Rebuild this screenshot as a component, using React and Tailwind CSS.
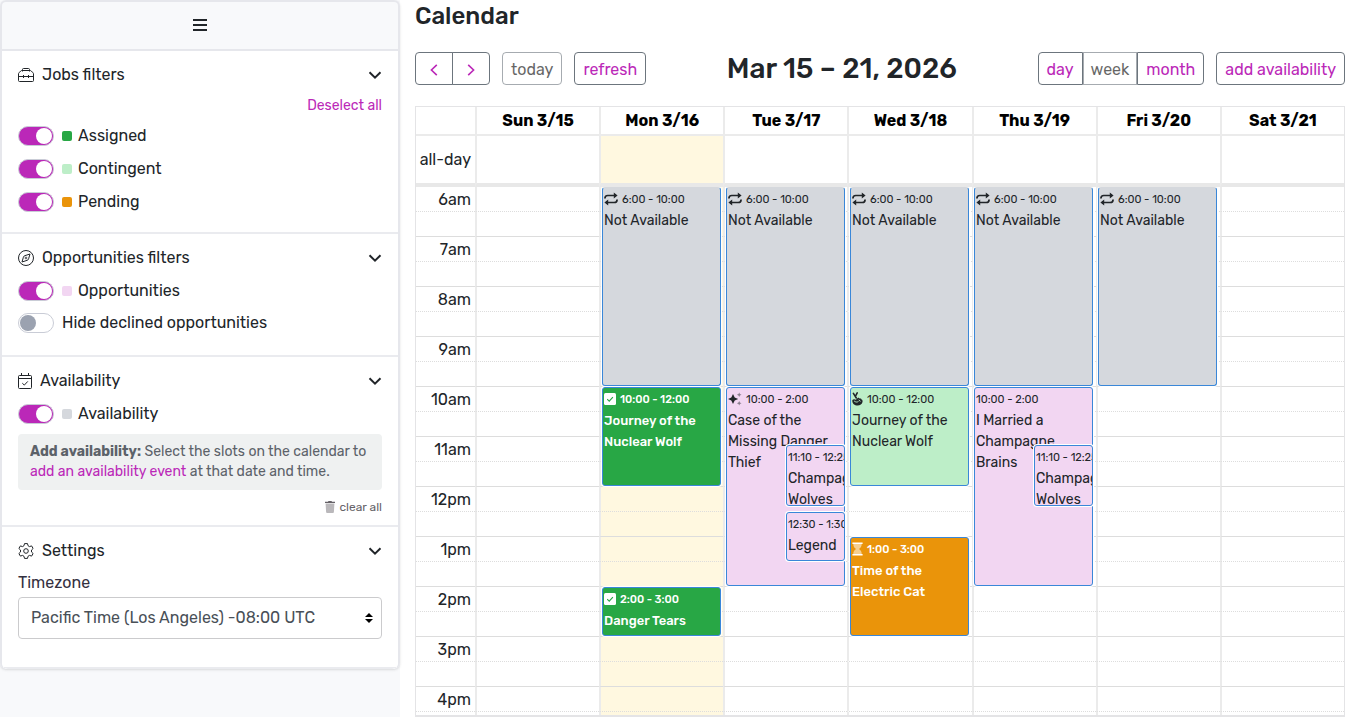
import { useState } from 'react';
import clsx from 'clsx';

const HOURS = ['6am', '7am', '8am', '9am', '10am', '11am', '12pm', '1pm', '2pm', '3pm', '4pm'];
const FIRST_HOUR = 6;
const HOUR_HEIGHT = 50;

const DAYS = [
  { label: 'Sun 3/15', events: [] },
  {
    label: 'Mon 3/16',
    today: true,
    events: [
      { kind: 'unavailable', start: 6, end: 10, time: '6:00 - 10:00', title: 'Not Available' },
      { kind: 'assigned', start: 10, end: 12, time: '10:00 - 12:00', title: 'Journey of the Nuclear Wolf' },
      { kind: 'assigned', start: 14, end: 15, time: '2:00 - 3:00', title: 'Danger Tears' },
    ],
  },
  {
    label: 'Tue 3/17',
    events: [
      { kind: 'unavailable', start: 6, end: 10, time: '6:00 - 10:00', title: 'Not Available' },
      { kind: 'opportunity', start: 10, end: 14, time: '10:00 - 2:00', title: 'Case of the Missing Danger Thief', isNew: true },
      { kind: 'opportunity', start: 11.16, end: 12.4, time: '11:10 - 12:25', title: 'Champagne Wolves', inset: true },
      { kind: 'opportunity', start: 12.5, end: 13.5, time: '12:30 - 1:30', title: 'Legend of the', inset: true },
    ],
  },
  {
    label: 'Wed 3/18',
    events: [
      { kind: 'unavailable', start: 6, end: 10, time: '6:00 - 10:00', title: 'Not Available' },
      { kind: 'contingent', start: 10, end: 12, time: '10:00 - 12:00', title: 'Journey of the Nuclear Wolf' },
      { kind: 'pending', start: 13, end: 15, time: '1:00 - 3:00', title: 'Time of the Electric Cat' },
    ],
  },
  {
    label: 'Thu 3/19',
    events: [
      { kind: 'unavailable', start: 6, end: 10, time: '6:00 - 10:00', title: 'Not Available' },
      { kind: 'opportunity', start: 10, end: 14, time: '10:00 - 2:00', title: 'I Married a Champagne Brains' },
      { kind: 'opportunity', start: 11.16, end: 12.4, time: '11:10 - 12:25', title: 'Champagne Wolves', inset: true },
    ],
  },
  {
    label: 'Fri 3/20',
    events: [{ kind: 'unavailable', start: 6, end: 10, time: '6:00 - 10:00', title: 'Not Available' }],
  },
  { label: 'Sat 3/21', events: [] },
];

const EVENT_STYLES = {
  unavailable: 'bg-[#d5d8dd] text-[#212529] text-sm',
  assigned: 'bg-[#28a745] text-white text-[13px] font-medium',
  contingent: 'bg-[#bdeec8] text-[#212529] text-sm',
  pending: 'bg-[#ea940a] text-white text-[13px] font-medium',
  opportunity: 'bg-[#f2d6f2] text-[#212529] text-sm',
};

const RepeatIcon = () => (
  <svg viewBox="0 0 14 14" className="h-3.5 w-3.5" fill="none" stroke="currentColor" strokeWidth="1.7" aria-hidden="true">
    <path d="M.9 6.600C.9 4.400 1.900 3.500 3.800 3.500H10.500" />
    <path d="M13.100 7.400c0 2.200-1 3.100-2.900 3.100H3.500" />
    <path d="M9.800.4 13.600 3.500 9.800 6.600zM4.200 7.400.4 10.500l3.800 3.100z" fill="currentColor" stroke="none" />
  </svg>
);

const CheckSquareIcon = () => (
  <svg viewBox="0 0 12 12" className="h-3 w-3" aria-hidden="true">
    <rect width="12" height="12" rx="1.5" fill="currentColor" />
    <path d="m3.2 6.2 2 1.9 3.7-4" fill="none" stroke="#28a745" strokeWidth="1.1" />
  </svg>
);

const SparklesIcon = () => (
  <svg viewBox="0 0 14 14" className="h-3.5 w-3.5" fill="currentColor" aria-hidden="true">
    <path d="M5 2 6.700 5.500 10.200 7 6.700 8.500 5 12 3.300 8.500-.2 7l3.500-1.500z" />
    <path d="M11.200.4l.7 1.600 1.600.7-1.600.7-.7 1.600-.7-1.600-1.600-.7 1.600-.7zM11.200 9l.7 1.600 1.600.7-1.600.7-.7 1.600-.7-1.600-1.600-.7 1.600-.7z" opacity=".5" />
  </svg>
);

const FingersCrossedIcon = () => (
  <svg viewBox="0 0 11 14" className="h-3.5 w-[11px]" aria-hidden="true">
    <path d="M1.400 1.400 4.300 6M5.200.900 3.600 4" fill="none" stroke="currentColor" strokeWidth="1.6" strokeLinecap="round" />
    <path d="M.3 8.200C.9 7 2.600 6.900 3.900 7.700l1.800-1.700c.8-.7 1.800-.1 1.900.7 1-.6 1.800 0 1.900.9 1 .3 1.300 1.300 1 2.500-.5 2.300-2.300 3.500-4.900 3.500-3 0-5.500-2-5.300-5.400z" fill="currentColor" />
    <path d="M2.400 9.200c1.200 1 2.400 1.200 3.700.500M7 8.200l1.200.900" fill="none" stroke="#bdeec8" strokeWidth=".9" strokeLinecap="round" />
  </svg>
);

const HourglassIcon = () => (
  <svg viewBox="0 0 11 14" className="h-3.5 w-[11px]" fill="currentColor" aria-hidden="true">
    <path d="M.4.4h10.200v1.700H.4zM.4 11.900h10.200v1.700H.4z" />
    <path d="M1.300 2.100h8.400c0 2.400-1 3.700-2.700 4.900 1.700 1.200 2.700 2.500 2.700 4.900H1.300C1.300 9.500 2.300 8.200 4 7 2.300 5.800 1.300 4.500 1.300 2.100z" opacity=".55" />
  </svg>
);

const ToolboxIcon = () => (
  <svg viewBox="0 0 16 16" className="h-4 w-4" fill="none" stroke="currentColor" aria-hidden="true">
    <path d="M4.500 4.500v-2a1 1 0 0 1 1-1h5a1 1 0 0 1 1 1v2M3.800 3.500h8.400c.5 0 .8.200 1.100.500l1.700 1.800c.3.300.5.700.5 1.200v6.500a1 1 0 0 1-1 1h-13a1 1 0 0 1-1-1V7c0-.5.2-.9.5-1.200L2.700 4c.3-.3.600-.5 1.100-.5zM.5 9.500h15M5.500 8v3M10.500 8v3" />
  </svg>
);

const CompassIcon = () => (
  <svg viewBox="0 0 16 16" className="h-4 w-4" fill="none" stroke="currentColor" aria-hidden="true">
    <circle cx="8" cy="8" r="7.500" />
    <path d="M12 4 10.600 8.800a2 2 0 0 1-1.400 1.500L4 12l1.400-4.800a2 2 0 0 1 1.400-1.500z" strokeLinejoin="round" />
    <circle cx="8" cy="8" r=".9" strokeWidth=".8" />
  </svg>
);

const CalendarCheckIcon = () => (
  <svg viewBox="0 0 14 16" className="h-4 w-3.5" fill="none" stroke="currentColor" aria-hidden="true">
    <path d="M1.500 2.500h11a1 1 0 0 1 1 1v11a1 1 0 0 1-1 1h-11a1 1 0 0 1-1-1v-11a1 1 0 0 1 1-1zM.5 5.500h13M3.500 0v2.500M10.500 0v2.500M4.300 10.200l2 1.900 3.500-3.700" />
  </svg>
);

const GearIcon = () => (
  <svg viewBox="0 0 16 16" className="h-4 w-4" fill="none" stroke="currentColor" strokeLinejoin="round" aria-hidden="true">
    <path d="M6.500.6h3l.5 2.100 1.500.9 2.100-.7 1.500 2.600-1.600 1.500v2l1.600 1.500-1.500 2.600-2.100-.7-1.500.9-.5 2.100h-3L6 13.300l-1.500-.9-2.100.7L.9 10.500 2.500 9V7L.9 5.500l1.500-2.600 2.100.7L6 2.700z" />
    <circle cx="8" cy="8" r="2.300" />
  </svg>
);

const TrashIcon = () => (
  <svg viewBox="0 0 10 12" className="h-3 w-2.5" fill="currentColor" aria-hidden="true">
    <path d="M0 .8h3L3.500 0h3L7 .8h3v1.300H0z" />
    <path d="M.6 2.400h8.800l-.5 8.600a1 1 0 0 1-1 1H2.100a1 1 0 0 1-1-1z" opacity=".45" />
  </svg>
);

const ChevronDown = () => (
  <svg viewBox="0 0 14 14" className="h-3.5 w-3.5" fill="none" stroke="currentColor" strokeWidth="2" aria-hidden="true">
    <path d="m1.500 4.300 5.500 5.300 5.500-5.300" />
  </svg>
);

const Chevron = ({ flip }) => (
  <svg viewBox="0 0 10 12" className={clsx('h-3 w-2.5', flip && 'rotate-180')} fill="none" stroke="currentColor" strokeWidth="1.600" aria-hidden="true">
    <path d="M7.800.8 2.400 6l5.400 5.200" />
  </svg>
);

const Section = ({ icon, title, className, children }) => {
  const [open, setOpen] = useState(true);

  return (
    <section className={clsx('border-b-2 border-[#eaebef] px-4 pt-3', className)}>
      <h2>
        <button type="button" onClick={() => setOpen(!open)} className="flex w-full items-center gap-2 text-left">
          {icon}
          <span className="flex-1">{title}</span>
          <ChevronDown />
        </button>
      </h2>
      {open && children}
    </section>
  );
};

const Toggle = ({ label, color, defaultChecked = true }) => (
  <label className="flex items-center">
    <input
      type="checkbox"
      role="switch"
      defaultChecked={defaultChecked}
      className="mr-2 h-5 w-9 appearance-none rounded-full border border-[#c9ccd6] bg-white p-px before:block before:h-4 before:w-4 before:rounded-full before:bg-[#9ba2b0] checked:bg-[#bb28b8] checked:before:translate-x-4 checked:before:bg-white"
    />
    {color && <span className={clsx('mr-1.5 h-2.5 w-2.5 rounded-xs', color)} />}
    {label}
  </label>
);

const Sidebar = () => (
  <aside className="w-[400px] shrink-0 bg-[#f8f9fb]">
    <div className="rounded-md border-2 border-b-0 border-[#e6e7ec] shadow-sm">
      <div className="flex h-[49px] items-center justify-center border-b-2 border-[#e6e7ec] pb-0.5">
        <button type="button" aria-label="Toggle menu">
          <svg viewBox="0 0 14 14" className="h-3.5 w-3.5" stroke="currentColor" strokeWidth="1.800" aria-hidden="true">
            <path d="M0 2h14M0 7h14M0 12h14" />
          </svg>
        </button>
      </div>
      <div className="overflow-hidden rounded-b-md bg-white">
        <Section icon={<ToolboxIcon />} title="Jobs filters" className="pb-[18px]">
          <div className="mt-[9px] text-right text-sm">
            <button type="button" className="text-[#bb28b8]">Deselect all</button>
          </div>
          <div className="mt-2 flex flex-col gap-[9px]">
            <Toggle label="Assigned" color="bg-[#28a745]" />
            <Toggle label="Contingent" color="bg-[#bdeec8]" />
            <Toggle label="Pending" color="bg-[#ea940a]" />
          </div>
        </Section>
        <Section icon={<CompassIcon />} title="Opportunities filters" className="pb-5">
          <div className="mt-[9px] flex flex-col gap-2">
            <Toggle label="Opportunities" color="bg-[#f2d6f2]" />
            <Toggle label="Hide declined opportunities" defaultChecked={false} />
          </div>
        </Section>
        <Section icon={<CalendarCheckIcon />} title="Availability" className="pb-2">
          <div className="mt-[9px]">
            <Toggle label="Availability" color="bg-[#d5d8dd]" />
          </div>
          <p className="mt-2 rounded bg-[#eff1f1] px-3 py-2 text-sm text-[#5c6269]">
            <strong>Add availability:</strong> Select the slots on the calendar to{' '}
            <a href="#add" className="text-[#bb28b8]">add an availability event</a> at that date and time.
          </p>
          <div className="mt-[7px] flex justify-end">
            <button type="button" className="flex items-center gap-1 text-xs leading-5 text-[#666268]">
              <TrashIcon />
              clear all
            </button>
          </div>
        </Section>
        <Section icon={<GearIcon />} title="Settings" className="pb-7">
          <label htmlFor="timezone" className="mt-2 block text-[#343040]">Timezone</label>
          <div className="relative mt-0.5">
            <select id="timezone" className="h-[42px] w-full appearance-none rounded border border-[#cbcbcd] bg-white px-3 text-[#495057]">
              <option>Pacific Time (Los Angeles) -08:00 UTC</option>
            </select>
            <svg viewBox="0 0 8 10" className="pointer-events-none absolute top-4 right-[9px] h-2.5 w-2" aria-hidden="true">
              <path d="M4 0 8 4H0zM4 10 0 6h8z" />
            </svg>
          </div>
        </Section>
      </div>
    </div>
  </aside>
);

const BUTTON = 'flex h-[33px] items-center justify-center border border-[#6c757d] pt-0.5';

const Toolbar = () => (
  <div className="flex items-center justify-between">
    <div className="flex gap-3 text-[#bb28b8]">
      <div className="flex">
        <button type="button" aria-label="Previous week" className={clsx(BUTTON, 'w-[38px] rounded-l')}>
          <Chevron />
        </button>
        <button type="button" aria-label="Next week" className={clsx(BUTTON, '-ml-px w-[38px] rounded-r')}>
          <Chevron flip />
        </button>
      </div>
      <button type="button" disabled className={clsx(BUTTON, 'rounded px-2 text-black opacity-60')}>today</button>
      <button type="button" className={clsx(BUTTON, 'rounded px-2')}>refresh</button>
    </div>
    <h2 className="text-[28px] leading-8 font-medium">Mar 15 – 21, 2026</h2>
    <div className="flex gap-3 text-[#bb28b8]">
      <div className="flex">
        <button type="button" className={clsx(BUTTON, 'rounded-l px-2')}>day</button>
        <button type="button" disabled className={clsx(BUTTON, 'px-[7px] text-black opacity-60')}>week</button>
        <button type="button" className={clsx(BUTTON, 'rounded-r px-2')}>month</button>
      </div>
      <button type="button" className={clsx(BUTTON, 'rounded px-2')}>add availability</button>
    </div>
  </div>
);

const EventIcon = ({ event }) => {
  if (event.kind === 'unavailable') return <RepeatIcon />;
  if (event.kind === 'assigned') return <CheckSquareIcon />;
  if (event.kind === 'contingent') return <FingersCrossedIcon />;
  if (event.kind === 'pending') return <HourglassIcon />;
  return event.isNew ? <SparklesIcon /> : null;
};

const CalendarEvent = ({ event }) => (
  <a
    href="#event"
    className={clsx(
      'absolute right-[3px] overflow-hidden rounded-[3px] border border-[#3a87d8] px-px pt-0.5 shadow-[0_0_0_1px_#fff]',
      event.inset ? 'left-1/2' : 'left-0.5',
      event.start === FIRST_HOUR && 'border-t-transparent',
      EVENT_STYLES[event.kind]
    )}
    style={{
      top: Math.round((event.start - FIRST_HOUR) * HOUR_HEIGHT),
      height: Math.round((event.end - event.start) * HOUR_HEIGHT) - 1,
    }}
  >
    <div className="flex items-center gap-1 text-[11px] leading-5 whitespace-nowrap [&>svg]:-mt-0.5">
      <EventIcon event={event} />
      {event.time}
    </div>
    <div className="leading-[21px]">{event.title}</div>
  </a>
);

const Columns = () => (
  <colgroup>
    <col className="w-[59px]" />
    {DAYS.map((day) => (
      <col key={day.label} />
    ))}
  </colgroup>
);

const Calendar = () => (
  <div className="mt-[21px] flex min-h-0 flex-1 flex-col border border-b-2 border-[#e4e4e6]">
    <table className="w-full table-fixed border-separate border-spacing-0">
      <Columns />
      <thead>
        <tr className="h-[29px] text-black">
          <td className="border-b-2 border-[#ebebeb]" />
          {DAYS.map((day) => (
            <th key={day.label} scope="col" className="border-b-2 border-l-2 border-[#ebebeb] p-0 font-bold">
              {day.label}
            </th>
          ))}
        </tr>
      </thead>
      <tbody>
        <tr className="h-[51px]">
          <th scope="row" className="border-b-4 border-[#e8e8e8] p-0 pr-1 text-right font-normal">all-day</th>
          {DAYS.map((day) => (
            <td key={day.label} className={clsx('border-b-4 border-l-2 border-b-[#e8e8e8] border-l-[#ebebeb]', day.today && 'bg-[#fff8e0]')} />
          ))}
        </tr>
      </tbody>
    </table>
    <div className="min-h-0 flex-1 overflow-y-auto [scrollbar-width:none]">
      <div className="relative">
        <table className="w-full table-fixed border-separate border-spacing-0">
          <Columns />
          {HOURS.map((hour) => (
            <tbody key={hour}>
              <tr className="h-[25px]">
                <th scope="row" className="border-b border-dotted border-[#ddd] p-0 pt-0.5 pr-1 text-right leading-[22px] font-normal">{hour}</th>
                {DAYS.map((day) => (
                  <td key={day.label} className={clsx('border-b border-l-2 border-b-[#ddd] border-l-[#ebebeb] [border-bottom-style:dotted]', day.today && 'bg-[#fff8e0]')} />
                ))}
              </tr>
              <tr className="h-[25px]">
                <td className="border-b border-[#ddd]" />
                {DAYS.map((day) => (
                  <td key={day.label} className={clsx('border-b border-l-2 border-b-[#ddd] border-l-[#ebebeb]', day.today && 'bg-[#fff8e0]')} />
                ))}
              </tr>
            </tbody>
          ))}
        </table>
        <div className="absolute inset-y-0 right-0 left-[60px] grid grid-cols-7">
          {DAYS.map((day) => (
            <div key={day.label} className="relative">
              {day.events.map((event) => (
                <CalendarEvent key={event.start} event={event} />
              ))}
            </div>
          ))}
        </div>
      </div>
    </div>
  </div>
);

const App = () => (
  <div className="flex h-screen overflow-hidden bg-white font-[Rubik,Roboto,sans-serif] text-[#212529]">
    <Sidebar />
    <main className="flex min-w-0 flex-1 flex-col pl-[15px]">
      <h1 className="mb-5 text-2xl font-medium">Calendar</h1>
      <Toolbar />
      <Calendar />
    </main>
  </div>
);

export default App;
